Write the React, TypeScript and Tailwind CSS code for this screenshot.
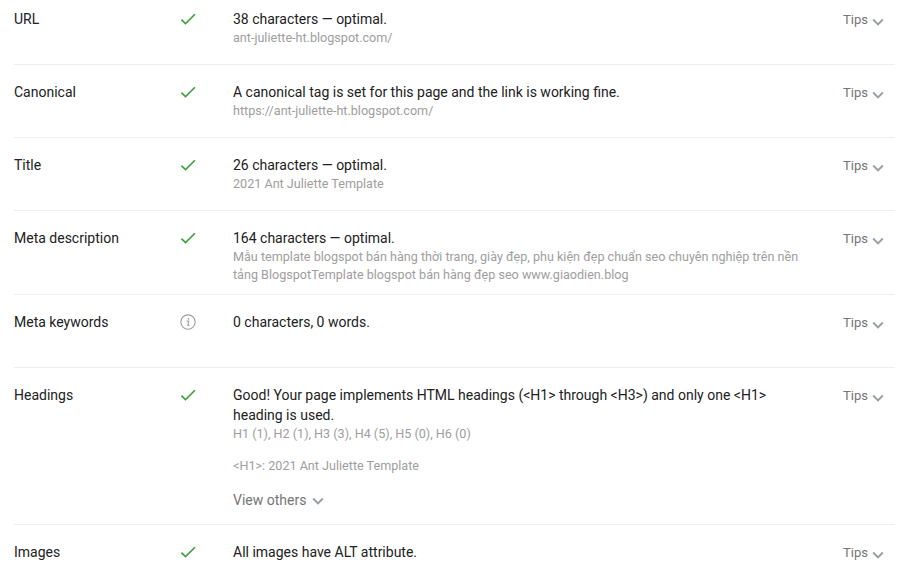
import React from "react";

const Check = () => (
  <svg width="20" height="20" viewBox="0 0 24 24" className="block">
    <path fill="#3c9f3c" d="M9 16.17L4.83 12l-1.42 1.41L9 19 21 7l-1.41-1.41z" />
  </svg>
);

const Info = () => (
  <svg width="20" height="20" viewBox="0 0 24 24" className="block">
    <circle cx="12" cy="12" r="8.6" fill="none" stroke="#9e9e9e" strokeWidth="1.3" />
    <circle cx="12.6" cy="8.2" r="1.05" fill="#9e9e9e" />
    <path d="M10.6 10.8h2.3l-1 5.2h1.2" fill="none" stroke="#9e9e9e" strokeWidth="1.4" strokeLinecap="round" strokeLinejoin="round" />
  </svg>
);

const Chevron = () => (
  <svg width="22" height="22" viewBox="0 0 24 24" className="block">
    <path fill="#9e9e9e" d="M16.59 8.59L12 13.17 7.41 8.59 6 10l6 6 6-6z" />
  </svg>
);

type Row = {
  label: string;
  icon: "check" | "info";
  main: React.ReactNode;
  subs?: React.ReactNode[];
  extra?: React.ReactNode;
};

const rows: Row[] = [
  {
    label: "URL",
    icon: "check",
    main: "38 characters — optimal.",
    subs: ["ant-juliette-ht.blogspot.com/"],
  },
  {
    label: "Canonical",
    icon: "check",
    main: "A canonical tag is set for this page and the link is working fine.",
    subs: ["https://ant-juliette-ht.blogspot.com/"],
  },
  {
    label: "Title",
    icon: "check",
    main: "26 characters — optimal.",
    subs: ["2021 Ant Juliette Template"],
  },
  {
    label: "Meta description",
    icon: "check",
    main: "164 characters — optimal.",
    subs: [
      "Mẫu template blogspot bán hàng thời trang, giày đẹp, phụ kiện đẹp chuẩn seo chuyên nghiệp trên nền tảng BlogspotTemplate blogspot bán hàng đẹp seo www.giaodien.blog",
    ],
  },
  {
    label: "Meta keywords",
    icon: "info",
    main: "0 characters, 0 words.",
  },
  {
    label: "Headings",
    icon: "check",
    main: "Good! Your page implements HTML headings (<H1> through <H3>) and only one <H1> heading is used.",
    subs: ["H1 (1), H2 (1), H3 (3), H4 (5), H5 (0), H6 (0)"],
    extra: (
      <>
        <div className="mt-[14px] text-[12.6px] leading-[18px] text-[#9e9e9e]">&lt;H1&gt;: 2021 Ant Juliette Template</div>
        <div className="mt-[15px] flex h-[20px] items-center text-[14px] leading-[20px] text-[#757575]">
          <span>View others</span>
          <span className="ml-[1px] mt-[2px]">
            <Chevron />
          </span>
        </div>
      </>
    ),
  },
  {
    label: "Images",
    icon: "check",
    main: "All images have ALT attribute.",
  },
];

export default function App() {
  return (
    <div
      className="h-[562px] w-[917px] overflow-hidden bg-white"
      style={{ fontFamily: "Roboto, 'Noto Sans', sans-serif" }}
    >
      <div className="mx-[14px] w-[881px]">
        {rows.map((r, i) => (
          <div
            key={r.label}
            className={
              "flex border-b border-[#eeeeee] " +
              (i === 0
                ? "min-h-[65px] pt-[9px] pb-[10px]"
                : i === 5
                ? "min-h-[73px] pt-[17px] pb-[14px]"
                : "min-h-[73px] pt-[17px] pb-[10px]")
            }
          >
            <div className="w-[164px] shrink-0 text-[14px] leading-[20px] text-[#212121]">{r.label}</div>
            <div className="w-[55px] shrink-0">{r.icon === "check" ? <Check /> : <Info />}</div>
            <div className="w-[576px] shrink-0">
              <div className="text-[14px] leading-[20px] text-[#212121]">{r.main}</div>
              {r.subs?.map((s, j) => (
                <div key={j} className="text-[12.6px] leading-[18px] text-[#9e9e9e]">
                  {s}
                </div>
              ))}
              {r.extra}
            </div>
            <div className="flex flex-1 justify-end pr-[6px]">
              <div className="mt-[1px] flex h-[20px] items-center text-[13px] text-[#757575]">
                <span>Tips</span>
                <span className="-ml-[1px] mt-[3px]">
                  <Chevron />
                </span>
              </div>
            </div>
          </div>
        ))}
      </div>
    </div>
  );
}
